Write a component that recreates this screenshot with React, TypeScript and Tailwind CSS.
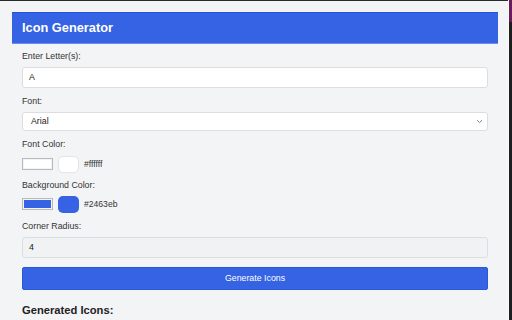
import React from 'react';

const Label: React.FC<{ text: string }> = ({ text }) => (
  <div className="h-[11px] leading-[11px] text-[8.8px] text-[#333] mb-[5px]">{text}</div>
);

const ColorRow: React.FC<{ color: string; hex: string; light?: boolean }> = ({ color, hex, light }) => (
  <div className="flex items-center h-[16px]">
    <div className="w-[31px] h-[12px] border border-[#b9b9bc] p-[1px] bg-[#f4f4f4]">
      <div className="w-full h-full" style={{ backgroundColor: color }} />
    </div>
    <div
      className={`ml-[5px] w-[21px] h-[17px] rounded-[5px] ${light ? 'border border-[#e3e4e7]' : ''}`}
      style={{ backgroundColor: color }}
    />
    <span className="ml-[5px] text-[8.6px] text-[#333]">{hex}</span>
  </div>
);

export default function App() {
  return (
    <div className="w-[512px] h-[320px] overflow-hidden flex bg-[#f3f4f6] font-['Liberation_Sans',Arial,sans-serif]">
      <div className="flex-1 flex flex-col">
        <div className="h-px bg-[#2a2a2a]" />
        <div className="pl-[12px] pr-[10px] pt-[11px]">
          <div className="w-[486px]">
            {/* Header */}
            <div className="h-[31px] bg-[#3563e3] border-t border-[#1f55dc] shadow-[0_1px_0_#6d8df0] flex items-center px-[10px]">
              <h1 className="text-white font-bold text-[12.8px]">Icon Generator</h1>
            </div>

            {/* Form */}
            <div className="px-[10px] pt-[8px]">
              <Label text="Enter Letter(s):" />
              <div className="h-[21px] bg-white border border-[#dcdde1] rounded-[3px] flex items-center px-[6px] text-[8.8px] text-[#222] mb-[8px]">
                A
              </div>

              <Label text="Font:" />
              <div className="h-[19px] bg-white border border-[#dcdde1] rounded-[3px] flex items-center justify-between pl-[8px] pr-[4px] text-[8.8px] text-[#222] mb-[8px]">
                <span>Arial</span>
                <svg width="7" height="5" viewBox="0 0 7 5" fill="none">
                  <path d="M1 1.2 L3.5 3.6 L6 1.2" stroke="#777" strokeWidth="0.9" />
                </svg>
              </div>

              <Label text="Font Color:" />
              <div className="mt-[6px] mb-[8px]">
                <ColorRow color="#ffffff" hex="#ffffff" light />
              </div>

              <Label text="Background Color:" />
              <div className="mb-[9px]">
                <ColorRow color="#3563e3" hex="#2463eb" />
              </div>

              <Label text="Corner Radius:" />
              <div className="h-[21px] bg-[#f1f2f4] border border-[#dcdde1] rounded-[3px] flex items-center px-[6px] text-[8.8px] text-[#222] mb-[9px]">
                4
              </div>

              <button className="block w-full h-[23px] bg-[#3563e3] border border-[#2a58da] rounded-[2px] text-white text-[8.8px]">
                Generate Icons
              </button>

              <h2 className="mt-[13px] text-[11.2px] font-bold text-[#222] leading-[14px]">Generated Icons:</h2>
            </div>
          </div>
        </div>
      </div>
      <div className="w-[1px] bg-[#fafafa]" />
      <div className="w-[3px] flex flex-col">
        <div className="h-[22px] bg-[#6b1b5a]" />
        <div className="flex-1 bg-[#1e1e1e]" />
      </div>
    </div>
  );
}
